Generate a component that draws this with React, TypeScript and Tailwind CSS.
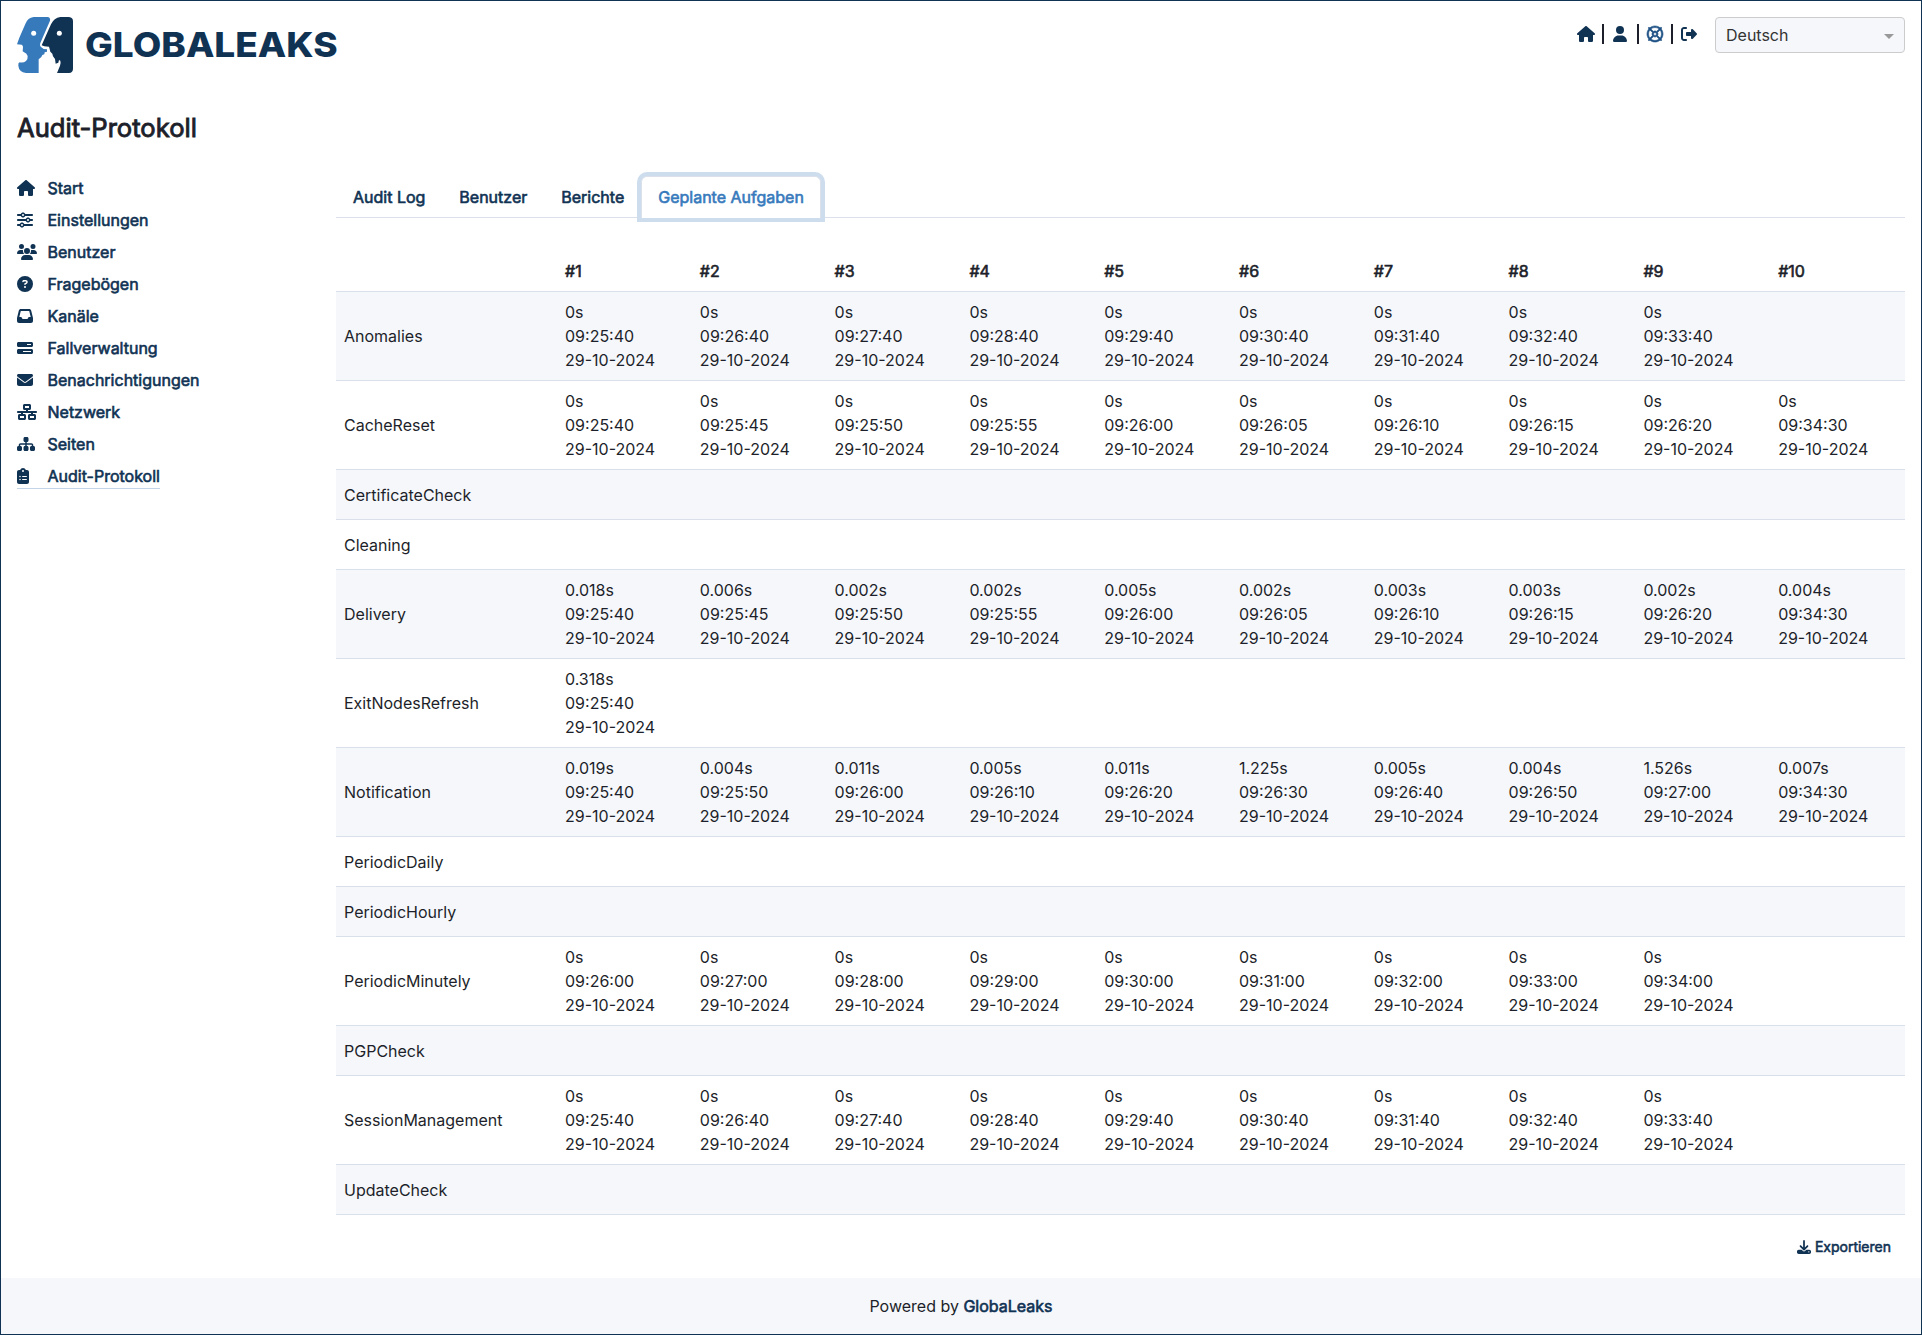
import type { IconType } from "react-icons";
import {
  FaBarsProgress,
  FaCircleQuestion,
  FaClipboardList,
  FaDownload,
  FaEnvelope,
  FaHouse,
  FaInbox,
  FaNetworkWired,
  FaRegLifeRing,
  FaRightFromBracket,
  FaSitemap,
  FaSliders,
  FaUser,
  FaUsers,
} from "react-icons/fa6";

const DATE = "29-10-2024";

const NAV: { icon: IconType; label: string; size: string; active?: boolean }[] = [
  { icon: FaHouse, label: "Start", size: "h-4 w-[18px]" },
  { icon: FaSliders, label: "Einstellungen", size: "h-4 w-4" },
  { icon: FaUsers, label: "Benutzer", size: "h-4 w-5" },
  { icon: FaCircleQuestion, label: "Fragebögen", size: "h-4 w-4" },
  { icon: FaInbox, label: "Kanäle", size: "h-4 w-4" },
  { icon: FaBarsProgress, label: "Fallverwaltung", size: "h-4 w-4" },
  { icon: FaEnvelope, label: "Benachrichtigungen", size: "h-4 w-4" },
  { icon: FaNetworkWired, label: "Netzwerk", size: "h-4 w-5" },
  { icon: FaSitemap, label: "Seiten", size: "h-4 w-[18px]" },
  { icon: FaClipboardList, label: "Audit-Protokoll", size: "h-4 w-3", active: true },
];

const TABS = ["Audit Log", "Benutzer", "Berichte", "Geplante Aufgaben"];

type Run = [duration: string, time: string];

const zero = (times: string[]): Run[] => times.map((t) => ["0s", t]);

const TICKS = [
  "09:25:40", "09:25:45", "09:25:50", "09:25:55", "09:26:00",
  "09:26:05", "09:26:10", "09:26:15", "09:26:20", "09:34:30",
];
const MINUTES_40 = [
  "09:25:40", "09:26:40", "09:27:40", "09:28:40", "09:29:40",
  "09:30:40", "09:31:40", "09:32:40", "09:33:40",
];
const MINUTES_00 = [
  "09:26:00", "09:27:00", "09:28:00", "09:29:00", "09:30:00",
  "09:31:00", "09:32:00", "09:33:00", "09:34:00",
];
const DELIVERY = [
  "0.018s", "0.006s", "0.002s", "0.002s", "0.005s",
  "0.002s", "0.003s", "0.003s", "0.002s", "0.004s",
];

const JOBS: { name: string; runs: Run[] }[] = [
  { name: "Anomalies", runs: zero(MINUTES_40) },
  { name: "CacheReset", runs: zero(TICKS) },
  { name: "CertificateCheck", runs: [] },
  { name: "Cleaning", runs: [] },
  { name: "Delivery", runs: TICKS.map((t, i): Run => [DELIVERY[i], t]) },
  { name: "ExitNodesRefresh", runs: [["0.318s", "09:25:40"]] },
  {
    name: "Notification",
    runs: [
      ["0.019s", "09:25:40"],
      ["0.004s", "09:25:50"],
      ["0.011s", "09:26:00"],
      ["0.005s", "09:26:10"],
      ["0.011s", "09:26:20"],
      ["1.225s", "09:26:30"],
      ["0.005s", "09:26:40"],
      ["0.004s", "09:26:50"],
      ["1.526s", "09:27:00"],
      ["0.007s", "09:34:30"],
    ],
  },
  { name: "PeriodicDaily", runs: [] },
  { name: "PeriodicHourly", runs: [] },
  { name: "PeriodicMinutely", runs: zero(MINUTES_00) },
  { name: "PGPCheck", runs: [] },
  { name: "SessionManagement", runs: zero(MINUTES_40) },
  { name: "UpdateCheck", runs: [] },
];

const COLUMNS = [0, 1, 2, 3, 4, 5, 6, 7, 8, 9];

function Logo() {
  return (
    <svg width="321" height="56" viewBox="0 0 963 168" className="block">
      <path
        fill="#377abc"
        d="M38 0H91Q101 1 99 11L70 78Q67 84 71 89L80 96L90 97V104L83 106L82 112L76 114L73 120L65 127V168H27Q6 165 4 146Q3 137 8 136Q20 138 27 132Q33 126 32 117Q29 108 20 105L17 103L18 90Q18 85 14 83L0 82L7 62L25 21Q32 2 50 0Z"
      />
      <path
        fill="#103253"
        d="M135 0H156Q168 1 168 13V155Q168 167 156 168H120L129 146Q132 136 130 131L126 129L124 137L116 140L114 126L108 118L106 110L100 104L98 96L96 89L82 88L74 85L86 58L102 22Q111 2 130 0Z"
      />
      <circle cx="50" cy="49" r="7.5" fill="#fff" />
      <circle cx="127" cy="49" r="7.5" fill="#fff" />
      <text
        x="204"
        y="120"
        fill="#103253"
        textLength="758"
        lengthAdjust="spacingAndGlyphs"
        className="font-['Inter',sans-serif] text-[103px] font-extrabold"
      >
        GLOBALEAKS
      </text>
    </svg>
  );
}

export default function App() {
  return (
    <div className="flex h-[1335px] w-[1922px] flex-col border border-[#103253] bg-white font-['Inter',sans-serif] text-base leading-6 text-[#1d1f2a]">
      <header className="flex items-start justify-between px-4 pt-4">
        <Logo />
        <div className="flex items-start">
          <div className="flex h-[34px] items-center pr-[18px] text-[#103253]">
            <FaHouse className="h-4 w-[18px]" />
            <span className="ml-[7px] h-5 w-0.5 bg-[#1d1f2a]" />
            <FaUser className="ml-[9px] h-4 w-3.5" />
            <span className="ml-2.5 h-5 w-0.5 bg-[#1d1f2a]" />
            <FaRegLifeRing className="ml-2 h-4 w-4 overflow-visible stroke-current stroke-[20] text-[#1f5185]" />
            <span className="mx-2 h-5 w-0.5 bg-[#1d1f2a]" />
            <FaRightFromBracket className="h-4 w-4" />
          </div>
          <div className="flex h-9 w-[190px] items-center justify-between rounded-[4px] border border-[#cccccc] bg-[#f5f7fb] pr-[10px] pl-[10px] text-[#333]">
            <span>Deutsch</span>
            <span className="mt-[3px] border-x-5 border-t-5 border-x-transparent border-t-[#999]" />
          </div>
        </div>
      </header>

      <h1 className="mt-[39px] px-4 text-[25.6px] leading-[31px] [-webkit-text-stroke:0.9px]">Audit-Protokoll</h1>

      <div className="mt-[33px] flex flex-1 px-4">
        <nav className="flex w-[319px] flex-col items-start text-[#103253]">
          {NAV.map(({ icon: Icon, label, size, active }) => (
            <a
              key={label}
              className={
                active
                  ? "flex h-[25px] items-center border-b border-[#c3d4e8]"
                  : "mb-2 flex h-6 items-center"
              }
            >
              <span className="w-[30.5px]">
                <Icon className={size} />
              </span>
              <span className="[-webkit-text-stroke:0.62px]">{label}</span>
            </a>
          ))}
        </nav>

        <main className="flex w-[1569px] flex-col">
          <div className="flex h-[42px] border-b border-[#dbe0ea]">
            {TABS.map((tab, i) => (
              <a
                key={tab}
                className={
                  i === 3
                    ? "relative h-[42px] rounded-t-md border border-b-0 border-[#dbe0ea] bg-white px-4 py-2 text-[#377abc] shadow-[0_0_0_4px_#cdddee] [-webkit-text-stroke:0.62px]"
                    : "h-[42px] border border-transparent px-4 py-2 text-[#103253] [-webkit-text-stroke:0.62px]"
                }
              >
                {tab}
              </a>
            ))}
          </div>

          <table className="mt-8 w-full table-fixed border-collapse text-left">
            <colgroup>
              <col className="w-[221px]" />
              {COLUMNS.map((c) => (
                <col key={c} />
              ))}
            </colgroup>
            <thead>
              <tr className="h-[41px] border-b border-[#d9e0ea]">
                <th />
                {COLUMNS.map((c) => (
                  <th key={c} className="px-2 pt-px font-normal [-webkit-text-stroke:0.62px]">
                    #{c + 1}
                  </th>
                ))}
              </tr>
            </thead>
            <tbody>
              {JOBS.map((job) => (
                <tr
                  key={job.name}
                  className={
                    job.runs.length
                      ? "h-[89px] border-b border-[#d9e0ea] odd:bg-[#f5f7fb]"
                      : "h-[50px] border-b border-[#d9e0ea] odd:bg-[#f5f7fb]"
                  }
                >
                  <td className={job.runs.length ? "px-2" : "px-2 pt-px"}>{job.name}</td>
                  {COLUMNS.map((c) => {
                    const run = job.runs[c];
                    return (
                      <td key={c} className="px-2">
                        {run && (
                          <>
                            <div>{run[0]}</div>
                            <div>{run[1]}</div>
                            <div>{DATE}</div>
                          </>
                        )}
                      </td>
                    );
                  })}
                </tr>
              ))}
            </tbody>
          </table>

          <div className="mt-[21px] flex items-center justify-end pr-[14px] text-sm leading-[22px] text-[#103253]">
            <FaDownload className="mr-1 h-3.5 w-3.5" />
            <span className="[-webkit-text-stroke:0.56px]">Exportieren</span>
          </div>
        </main>
      </div>

      <footer className="flex h-14 items-center justify-center bg-[#f5f7fb]">
        <span>
          Powered by <a className="text-[#103253] [-webkit-text-stroke:0.62px]">GlobaLeaks</a>
        </span>
      </footer>
    </div>
  );
}
